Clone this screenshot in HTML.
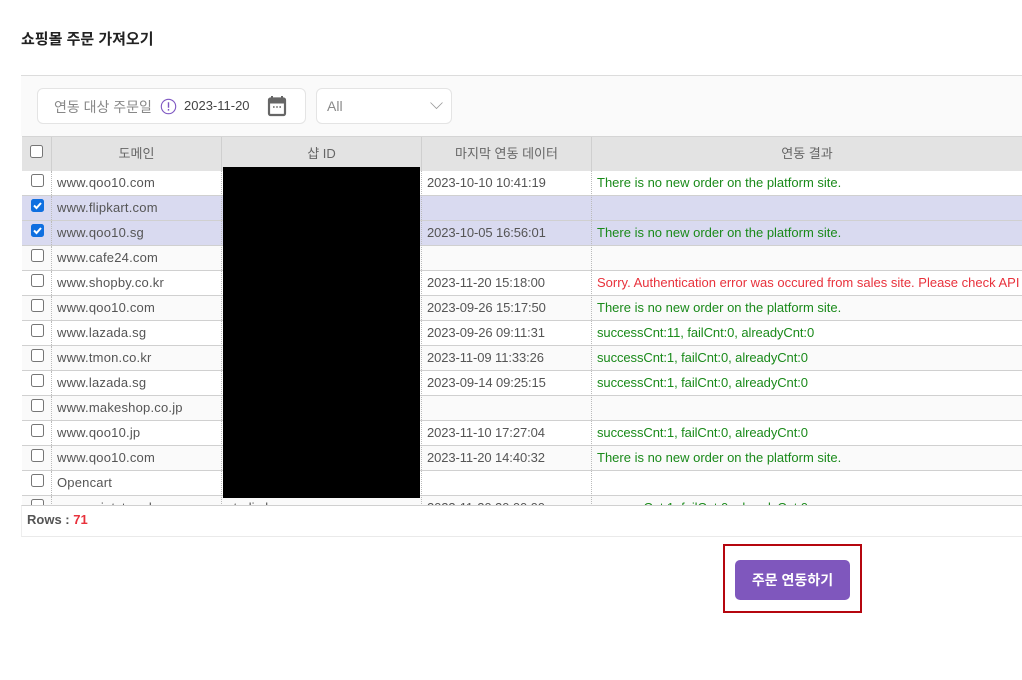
<!DOCTYPE html>
<html><head><meta charset="utf-8"><style>
html,body{margin:0;padding:0;background:#fff;width:1022px;height:680px;overflow:hidden}
body{font-family:"Liberation Sans","Noto Sans CJK KR",sans-serif;position:relative;color:#555}
.a{position:absolute;white-space:nowrap}
.grid{position:absolute;left:22px;top:136px;width:1000px;height:369px;overflow:hidden;border-top:1px solid #d5d5d5;box-sizing:border-box;background:#fff}
.hd{position:absolute;top:0;height:34px;background:#e3e3e3;border-right:1px solid #cfcfcf;box-sizing:border-box;text-align:center;font-size:13px;line-height:33px;color:#666}
.row{position:absolute;left:0;width:1000px;height:25px;border-bottom:1px solid #d0d0d0;box-sizing:border-box;font-size:13px;line-height:24px;color:#555}
.row.o{background:#fafafa}.row.s{background:#d9daf0}.row.w{background:#fff}
.row .c0{position:absolute;left:0;top:0;width:30px;height:24px;border-right:1px dotted #bbb;box-sizing:border-box}
.row span{position:absolute;top:0;white-space:nowrap}
.v{position:absolute;top:34px;height:335px;width:0;border-left:1px dotted #bbb}
.d{left:35px;letter-spacing:.2px}.t{left:405px;letter-spacing:-.1px}.r{left:575px}
.n{letter-spacing:-.08px}
.g{color:#1a8a1a}.e{color:#e8323c}
.cb{position:absolute;left:9px;top:3px;width:11px;height:11px;border:1px solid #767676;border-radius:2.5px;background:#fff}
.cb.k{background:#0f6fe0;border-color:#0f6fe0}
.cb.k svg{position:absolute;left:0;top:0}
</style></head><body>
<div class="a" style="left:21px;top:30px;font-size:15px;line-height:20px;font-weight:700;color:#222">쇼핑몰 주문 가져오기</div>
<div class="a" style="left:21px;top:75px;width:1001px;height:61px;background:#fafafa;border-top:1px solid #dcdcdc;box-sizing:border-box"></div>
<div class="a" style="left:37px;top:88px;width:269px;height:36px;background:#fff;border:1px solid #e4e4e4;border-radius:6px;box-sizing:border-box"></div>
<div class="a" style="left:54px;top:98px;font-size:14px;line-height:18px;color:#888">연동 대상 주문일</div>
<svg class="a" style="left:160px;top:98px" width="17" height="17" viewBox="0 0 17 17"><circle cx="8.5" cy="8.5" r="7.2" fill="none" stroke="#7e57c2" stroke-width="1.1"/><path d="M8.5 4.2v5.6M8.5 11v1.6" stroke="#7e57c2" stroke-width="1.4" fill="none"/></svg>
<div class="a" style="left:184px;top:97px;font-size:13px;line-height:18px;color:#444">2023-11-20</div>
<svg class="a" style="left:267px;top:96px" width="20" height="21" viewBox="0 0 20 21"><path d="M5 0v3.5M15 0v3.5" stroke="#666" stroke-width="2"/><rect x="2" y="2.5" width="16" height="16.5" rx="1.5" fill="none" stroke="#666" stroke-width="2.2"/><rect x="2" y="2.5" width="16" height="5" fill="#666"/><path d="M6 11h1.6M9.2 11h1.6M12.4 11h1.6" stroke="#666" stroke-width="1.4"/></svg>
<div class="a" style="left:316px;top:88px;width:136px;height:36px;background:#fff;border:1px solid #e4e4e4;border-radius:6px;box-sizing:border-box"></div>
<div class="a" style="left:327px;top:97px;font-size:14px;line-height:18px;color:#8a8a8a">All</div>
<svg class="a" style="left:429px;top:101px" width="15" height="10" viewBox="0 0 15 10"><path d="M1.5 1.5l6 6 6-6" fill="none" stroke="#999" stroke-width=".8"/></svg>

<div class="grid">
<div class="hd" style="left:0;width:30px"></div>
<div class="cb" style="left:8px;top:8px;background:#fff"></div>
<div class="hd" style="left:30px;width:170px">도메인</div>
<div class="hd" style="left:200px;width:200px">샵 ID</div>
<div class="hd" style="left:400px;width:170px">마지막 연동 데이터</div>
<div class="hd" style="left:570px;width:430px;border-right:0">연동 결과</div>

<div class="row w" style="top:34px"><div class="c0"><i class="cb"></i></div><span class="d">www.qoo10.com</span><span class="t">2023-10-10 10:41:19</span><span class="r g">There is no new order on the platform site.</span></div>
<div class="row s" style="top:59px"><div class="c0"><i class="cb k"><svg width="11" height="11" viewBox="0 0 11 11"><path d="M2 5.5l2.5 2.5L9 3" fill="none" stroke="#fff" stroke-width="2"/></svg></i></div><span class="d">www.flipkart.com</span></div>
<div class="row s" style="top:84px"><div class="c0"><i class="cb k"><svg width="11" height="11" viewBox="0 0 11 11"><path d="M2 5.5l2.5 2.5L9 3" fill="none" stroke="#fff" stroke-width="2"/></svg></i></div><span class="d">www.qoo10.sg</span><span class="t">2023-10-05 16:56:01</span><span class="r g">There is no new order on the platform site.</span></div>
<div class="row o" style="top:109px"><div class="c0"><i class="cb"></i></div><span class="d">www.cafe24.com</span></div>
<div class="row w" style="top:134px"><div class="c0"><i class="cb"></i></div><span class="d">www.shopby.co.kr</span><span class="t">2023-11-20 15:18:00</span><span class="r e">Sorry. Authentication error was occured from sales site. Please check API key.</span></div>
<div class="row o" style="top:159px"><div class="c0"><i class="cb"></i></div><span class="d">www.qoo10.com</span><span class="t">2023-09-26 15:17:50</span><span class="r g">There is no new order on the platform site.</span></div>
<div class="row w" style="top:184px"><div class="c0"><i class="cb"></i></div><span class="d">www.lazada.sg</span><span class="t">2023-09-26 09:11:31</span><span class="r g n">successCnt:11, failCnt:0, alreadyCnt:0</span></div>
<div class="row o" style="top:209px"><div class="c0"><i class="cb"></i></div><span class="d">www.tmon.co.kr</span><span class="t">2023-11-09 11:33:26</span><span class="r g n">successCnt:1, failCnt:0, alreadyCnt:0</span></div>
<div class="row w" style="top:234px"><div class="c0"><i class="cb"></i></div><span class="d">www.lazada.sg</span><span class="t">2023-09-14 09:25:15</span><span class="r g n">successCnt:1, failCnt:0, alreadyCnt:0</span></div>
<div class="row o" style="top:259px"><div class="c0"><i class="cb"></i></div><span class="d">www.makeshop.co.jp</span></div>
<div class="row w" style="top:284px"><div class="c0"><i class="cb"></i></div><span class="d">www.qoo10.jp</span><span class="t">2023-11-10 17:27:04</span><span class="r g n">successCnt:1, failCnt:0, alreadyCnt:0</span></div>
<div class="row o" style="top:309px"><div class="c0"><i class="cb"></i></div><span class="d">www.qoo10.com</span><span class="t">2023-11-20 14:40:32</span><span class="r g">There is no new order on the platform site.</span></div>
<div class="row w" style="top:334px"><div class="c0"><i class="cb"></i></div><span class="d">Opencart</span></div>
<div class="row o" style="top:359px"><div class="c0"><i class="cb"></i></div><span class="d">www.printstore.kr</span><span style="left:205px">studio.kr</span><span class="t">2023-11-20 20:00:00</span><span class="r g n">successCnt:1, failCnt:0, alreadyCnt:0</span></div>

<div class="v" style="left:199px"></div>
<div class="v" style="left:399px"></div>
<div class="v" style="left:569px"></div>
</div>

<div class="a" style="left:223px;top:167px;width:197px;height:331px;background:#000"></div>

<div class="a" style="left:21px;top:505px;width:1001px;height:32px;border-top:1px solid #d0d0d0;border-bottom:1px solid #eaeaea;border-left:1px solid #eee;box-sizing:border-box;background:#fff"></div>
<div class="a" style="left:27px;top:511px;font-size:13px;line-height:18px;font-weight:700;color:#555">Rows : <span style="color:#e8323c">71</span></div>

<div class="a" style="left:723px;top:544px;width:139px;height:69px;border:2px solid #b5060f;box-sizing:border-box"></div>
<div class="a" style="left:735px;top:560px;width:115px;height:40px;background:#7f57bd;border-radius:5px;color:#fff;font-size:14px;font-weight:700;line-height:41px;text-align:center">주문 연동하기</div>
</body></html>
